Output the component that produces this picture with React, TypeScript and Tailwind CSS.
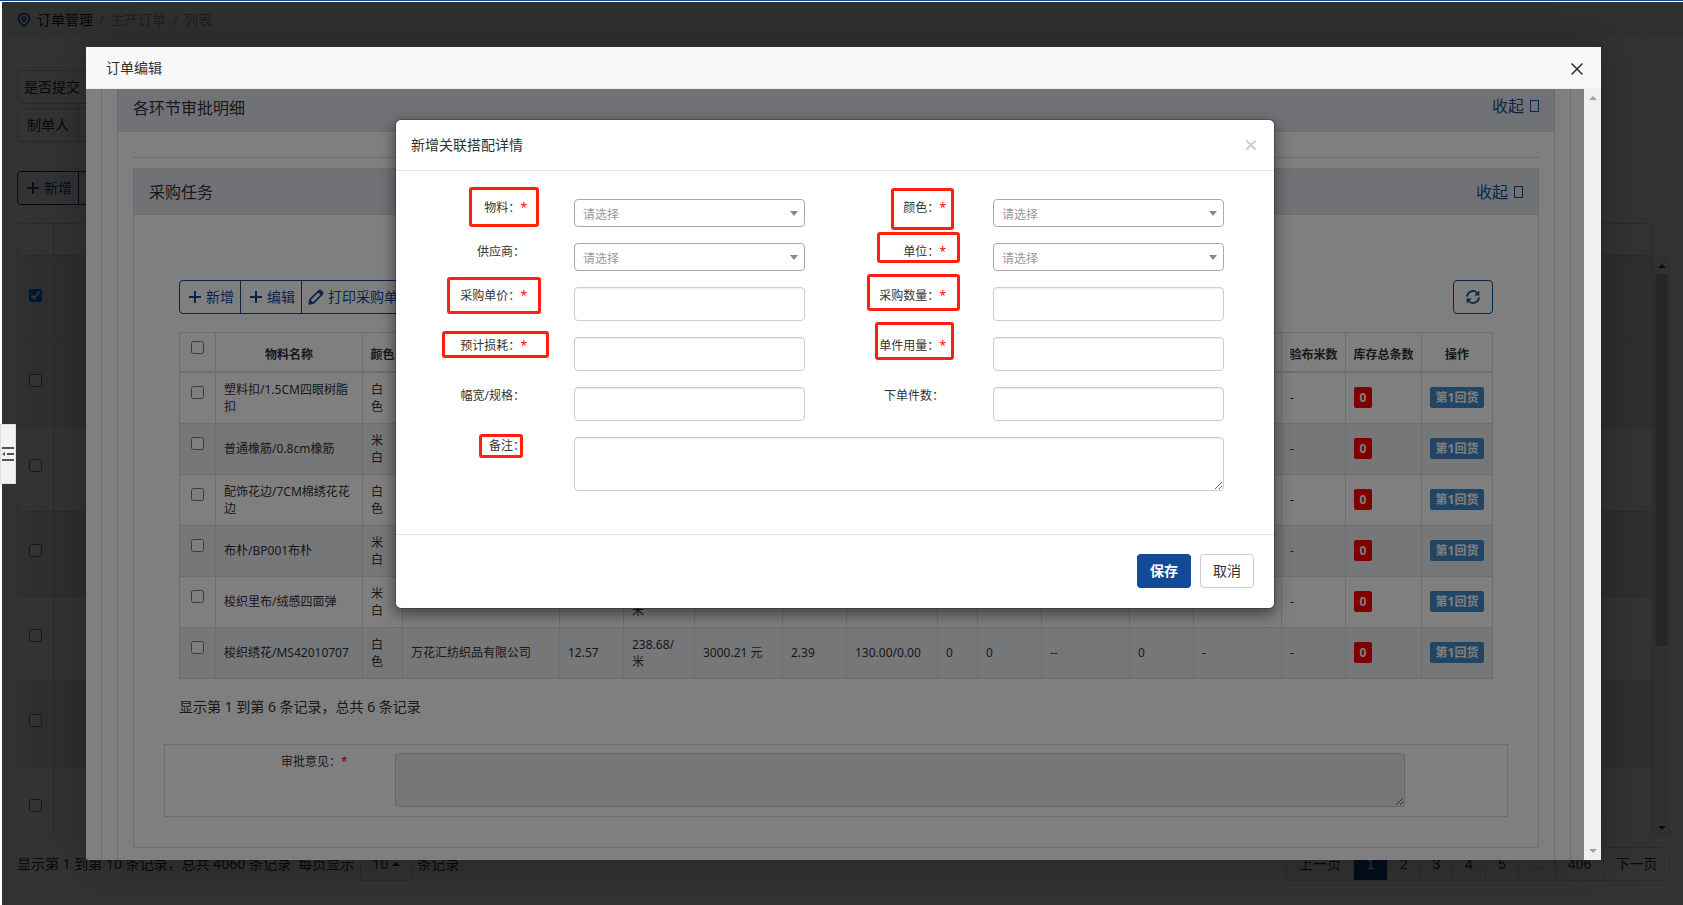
import { clsx } from 'clsx';

type Field = {
  id: string;
  label: string;
  required?: boolean;
  select?: boolean;
  mark?: string;
};

const FIELDS: Field[] = [
  { id: 'material', label: '物料：', required: true, select: true, mark: '-right-3 -top-3 w-[70px] h-10' },
  { id: 'color', label: '颜色：', required: true, select: true, mark: '-right-2 -top-[11px] w-[63px] h-[42px]' },
  { id: 'supplier', label: '供应商：', select: true },
  { id: 'unit', label: '单位：', required: true, select: true, mark: '-right-3.5 -top-[11px] w-[83px] h-[31px]' },
  { id: 'price', label: '采购单价：', required: true, mark: '-right-3.5 -top-2.5 w-[94px] h-[37px]' },
  { id: 'amount', label: '采购数量：', required: true, mark: '-right-3.5 -top-[13px] w-[93px] h-[37px]' },
  { id: 'loss', label: '预计损耗：', required: true, mark: '-right-[22px] -top-1.5 w-[107px] h-[27px]' },
  { id: 'usage', label: '单件用量：', required: true, mark: '-right-2 -top-[15px] w-[79px] h-[38px]' },
  { id: 'spec', label: '幅宽/规格：' },
  { id: 'pieces', label: '下单件数：' },
];

const COLUMNS = [
  { w: 36, title: '' },
  { w: 147, title: '物料名称' },
  { w: 40, title: '颜色' },
  { w: 157, title: '' },
  { w: 64, title: '' },
  { w: 71, title: '' },
  { w: 88, title: '' },
  { w: 64, title: '' },
  { w: 91, title: '' },
  { w: 40, title: '' },
  { w: 64, title: '' },
  { w: 88, title: '' },
  { w: 64, title: '' },
  { w: 88, title: '' },
  { w: 64, title: '验布米数' },
  { w: 76, title: '库存总条数' },
  { w: 71, title: '操作' },
];

const ROWS = [
  { name: '塑料扣/1.5CM四眼树脂扣', color: '白色', cells: ['', '', '', '', '', '', '', '', '', '', ''] },
  { name: '普通橡筋/0.8cm橡筋', color: '米白', cells: ['', '', '', '', '', '', '', '', '', '', ''] },
  { name: '配饰花边/7CM棉绣花花边', color: '白色', cells: ['', '', '', '', '', '', '', '', '', '', ''] },
  { name: '布朴/BP001布朴', color: '米白', cells: ['', '', '', '', '', '', '', '', '', '', ''] },
  { name: '梭织里布/绒感四面弹', color: '米白', cells: ['', '', '238.68/米', '', '', '', '', '', '', '', ''] },
  {
    name: '梭织绣花/MS42010707',
    color: '白色',
    cells: ['万花汇纺织品有限公司', '12.57', '238.68/米', '3000.21 元', '2.39', '130.00/0.00', '0', '0', '--', '0', '-'],
  },
];

const LIST_ROWS = ['bg-[#e9e9e9]', 'bg-[#eaebed]', 'bg-white', 'bg-[#eaebed]', 'bg-white', 'bg-[#eaebed]', 'bg-white'];

const PAGES = [
  { text: '上一页', w: 'w-[66px]' },
  { text: '1', w: 'w-[34px]' },
  { text: '2', w: 'w-[33px]' },
  { text: '3', w: 'w-8' },
  { text: '4', w: 'w-[33px]' },
  { text: '5', w: 'w-[33px]' },
  { text: '...', w: 'w-[37px]' },
  { text: '406', w: 'w-12' },
  { text: '下一页', w: 'w-[66px]' },
];

function PlusIcon() {
  return (
    <svg className="w-3 h-3 shrink-0" viewBox="0 0 12 12" fill="currentColor">
      <path d="M5 0h2v5h5v2H7v5H5V7H0V5h5z" />
    </svg>
  );
}

function PencilIcon() {
  return (
    <svg className="w-4 h-4 shrink-0" viewBox="0 0 16 16" fill="none" stroke="currentColor" strokeWidth="1.7" strokeLinejoin="round">
      <path d="M1.2 14.8l1-4.4L10.8 1.8q1-.9 2 0l1.4 1.4q.9 1 0 2L5.6 13.8z" />
      <path d="M9.6 3l3.4 3.4 1.600-1.600L11.600 1.200z" fill="currentColor" stroke="none" />
      <path d="M2.2 10.6l3.2 3.2-4.4 1z" fill="currentColor" stroke="none" />
    </svg>
  );
}

function RefreshIcon() {
  return (
    <svg className="w-3.5 h-3.5" viewBox="0 0 14 14" fill="none" stroke="currentColor" strokeWidth="1.7">
      <path d="M1 6.6A6 6 0 0 1 11.6 3.2" />
      <path d="M13 7.4A6 6 0 0 1 2.4 10.8" />
      <path d="M13.3 .5v5H8.3z" fill="currentColor" stroke="none" />
      <path d="M.7 13.5v-5h5z" fill="currentColor" stroke="none" />
    </svg>
  );
}

function PinIcon() {
  return (
    <svg className="w-3.5 h-3.5 text-[#134a97]" viewBox="0 0 14 14" fill="none" stroke="currentColor" strokeWidth="1.5">
      <path d="M7 13.2C4 10.8 1.6 8.4 1.6 5.8a5.4 5.2 0 0 1 10.8 0c0 2.6-2.4 5-5.4 7.4z" />
      <circle cx="7" cy="5.8" r="1.8" />
    </svg>
  );
}

function Caret({ up, className }: { up?: boolean; className?: string }) {
  return (
    <svg className={clsx('w-2 h-1', className)} viewBox="0 0 8 4" fill="currentColor">
      <path d={up ? 'M0 4L4 0l4 4z' : 'M0 0h8L4 4z'} />
    </svg>
  );
}

function CollapseLink() {
  return (
    <a href="#" className="flex items-center gap-1.5 text-base leading-5 text-[#134a97]">
      收起
      <span className="w-[9px] h-3 border border-current" />
    </a>
  );
}

function OrderList() {
  return (
    <div className="flex flex-col h-full">
      <nav className="flex items-center h-9 pl-[15px] bg-[#f0f0f0] text-sm leading-5 text-[#999]">
        <PinIcon />
        <a href="#" className="ml-1.5 text-[#222]">订单管理</a>
        <span className="w-[17px] text-center">/</span>
        <a href="#">生产订单</a>
        <span className="w-[18px] text-center">/</span>
        <span>列表</span>
      </nav>

      <div className="pl-[15px] pt-8 text-sm leading-5 text-[#333]">
        <div className="flex items-center w-60 h-[34px] pl-1.5 border border-[#ccc] rounded">是否提交</div>
        <div className="flex items-center w-60 h-[34px] mt-1 border border-[#ccc] rounded">
          <span className="flex items-center h-full w-[61px] pl-[9px] border-r border-[#ccc]">制单人</span>
        </div>
        <div className="flex mt-[29px] text-[#134a97]">
          <button className="flex items-center gap-[5px] h-[34px] w-[62px] pl-[9px] border border-current rounded-l">
            <PlusIcon />
            新增
          </button>
          <button className="h-[34px] w-[62px] -ml-px border border-current" aria-label="编辑" />
        </div>
      </div>

      <div className="flex h-[614px] ml-[15px] mr-[13px] mt-[18px]">
        <div className="flex-1 overflow-hidden">
          <div className="flex h-[34px] border border-b-2 border-[#ddd]">
            <div className="w-9 border-r border-[#ddd]" />
          </div>
          {LIST_ROWS.map((bg, i) => (
            <div key={i} className={clsx('flex h-[85px] border-x border-b border-[#ddd]', bg)}>
              <div className="flex items-center justify-center w-9 pb-2 border-r border-[#ddd]">
                <input type="checkbox" aria-label="选择" className="w-[13px] h-[13px]" defaultChecked={i === 0} />
              </div>
            </div>
          ))}
        </div>
        <div className="flex flex-col items-center justify-between w-[17px] mt-[34px] py-[7px] bg-[#f1f1f1] text-[#333]">
          <Caret up />
          <div className="w-[13px] h-[372px] mb-auto mt-[6px] bg-[#c1c1c1]" />
          <Caret />
        </div>
      </div>

      <div className="flex items-center h-[34px] pl-[15px] pr-[13px] mt-[10px] text-sm leading-5 text-[#333]">
        <span className="whitespace-pre">显示第 1 到第 10 条记录，总共 4060 条记录  每页显示</span>
        <button className="flex items-center justify-center gap-1 w-[52px] h-[34px] ml-1.5 mr-[5px] border border-[#ccc] rounded">
          10 <Caret up />
        </button>
        <span>条记录</span>
        <div className="flex ml-auto border border-[#ddd] rounded font-['Liberation_Sans','Noto_Sans_CJK_SC',sans-serif]">
          {PAGES.map((p, i) => (
            <button
              key={p.text}
              className={clsx(
                'h-8 border-[#ddd]',
                p.w,
                i > 0 && 'border-l',
                p.text === '1' && 'bg-[#134a97] text-white',
                p.text === '...' && 'text-[#999]'
              )}
            >
              {p.text}
            </button>
          ))}
        </div>
      </div>
    </div>
  );
}

function MaterialTable() {
  return (
    <table className="w-full table-fixed border-collapse text-xs leading-[17px] text-[#333]">
      <colgroup>
        {COLUMNS.map((c, i) => (
          <col key={i} style={{ width: c.w }} />
        ))}
      </colgroup>
      <thead>
        <tr className="h-[39px]">
          {COLUMNS.map((c, i) => (
            <th
              key={i}
              className={clsx(
                'border border-b-2 border-[#ddd] font-bold whitespace-nowrap',
                i === 0 ? 'align-top pt-2' : 'align-bottom pb-2'
              )}
            >
              {i === 0 ? <input type="checkbox" aria-label="全选" className="block w-[13px] h-[13px] mx-auto" /> : c.title}
            </th>
          ))}
        </tr>
      </thead>
      <tbody>
        {ROWS.map((row, i) => (
          <tr key={row.name} className={clsx('h-[51px]', i % 2 === 1 && 'bg-[#eceff3]')}>
            <td className="border border-[#ddd] pb-2.5">
              <input type="checkbox" aria-label={row.name} className="block w-[13px] h-[13px] mx-auto" />
            </td>
            <td className="border border-[#ddd] p-2">{row.name}</td>
            <td className="border border-[#ddd] pl-2 pr-4">{row.color}</td>
            {row.cells.map((cell, j) => (
              <td key={j} className={clsx('border border-[#ddd] px-2', j !== 2 && 'whitespace-nowrap')}>
                {j === 2 && cell ? (
                  <>
                    {cell.slice(0, -1)}
                    <br />
                    {cell.slice(-1)}
                  </>
                ) : (
                  cell
                )}
              </td>
            ))}
            <td className="border border-[#ddd] px-2">-</td>
            <td className="border border-[#ddd] px-2">
              <span className="flex items-center justify-center w-[18px] h-[21px] rounded-xs bg-[#ff0000] text-white font-bold">0</span>
            </td>
            <td className="border border-[#ddd] px-2">
              <button className="flex items-center justify-center w-[54px] h-[21px] rounded-xs bg-[#428bca] text-white font-bold whitespace-nowrap">
                第1回货
              </button>
            </td>
          </tr>
        ))}
      </tbody>
    </table>
  );
}

function TaskPanel() {
  return (
    <section className="border border-[#ddd]">
      <header className="flex items-center justify-between h-[46px] px-[15px] border-b border-[#ddd] bg-[#e2e5ec]">
        <h3 className="text-base leading-5 text-[#333]">采购任务</h3>
        <CollapseLink />
      </header>
      <div className="px-[45px] pt-[65px]">
        <div className="flex items-center text-sm leading-5 text-[#134a97]">
          <button className="flex items-center gap-[5px] h-[34px] w-[62px] pl-[9px] border border-current rounded-l">
            <PlusIcon />
            新增
          </button>
          <button className="flex items-center gap-[5px] h-[34px] w-[62px] pl-[9px] -ml-px border border-current">
            <PlusIcon />
            编辑
          </button>
          <button className="flex items-center gap-1 h-[34px] px-[6px] -ml-px border border-current rounded-r">
            <PencilIcon />
            打印采购单
          </button>
          <button className="flex items-center justify-center w-10 h-[34px] ml-auto border border-current rounded" aria-label="刷新">
            <RefreshIcon />
          </button>
        </div>
        <div className="mt-[18px]">
          <MaterialTable />
        </div>
        <p className="mt-[18px] text-sm leading-5 text-[#333]">显示第 1 到第 6 条记录，总共 6 条记录</p>
      </div>
      <div className="grid grid-cols-[230fr_1012fr_102fr] mx-[30px] mt-[27px] mb-[30px] h-[73px] pt-2 border border-[#ddd]">
        <label htmlFor="opinion" className="pr-[47px] text-right text-xs leading-[17px] text-[#333]">
          审批意见：<span className="text-[#f00]">*</span>
        </label>
        <textarea id="opinion" className="h-[54px] resize border border-[#ccc] rounded bg-[#eee]" />
      </div>
    </section>
  );
}

function FieldLabel({ field }: { field: Field }) {
  return (
    <label
      htmlFor={field.id}
      className={clsx(
        'relative w-[111px] h-[17px] mr-[47px] shrink-0 text-right text-xs leading-[17px] text-[#333]',
        !field.required && 'pr-0.5'
      )}
    >
      {field.label}
      {field.required && <span className="text-[#f00]">*</span>}
      {field.mark && <span className={clsx('absolute border-3 border-[#ff2010] rounded-[3px]', field.mark)} />}
    </label>
  );
}

function MatchDialog() {
  return (
    <div
      role="dialog"
      className="w-[880px] max-w-full mt-[30px] border border-black/20 rounded-md bg-white bg-clip-padding shadow-[0_5px_15px_rgba(0,0,0,0.5)]"
    >
      <header className="flex items-center justify-between h-[51px] pl-[15px] pr-[18px] border-b border-[#e5e5e5]">
        <h4 className="text-sm leading-5 text-[#333]">新增关联搭配详情</h4>
        <button aria-label="关闭" className="text-[#ccc]">
          <svg className="w-2.5 h-2.5" viewBox="0 0 10 10" stroke="currentColor" strokeWidth="2">
            <path d="M.5 .5l9 9M9.5 .5l-9 9" />
          </svg>
        </button>
      </header>

      <form className="px-5 pt-7 pb-[43px]">
        <div className="grid grid-cols-2 gap-y-4">
          {FIELDS.map(field => (
            <div key={field.id} className="flex pr-[30px]">
              <FieldLabel field={field} />
              {field.select ? (
                <div className="relative flex-1">
                  <select
                    id={field.id}
                    className="block w-full h-7 pl-2 pt-1 appearance-none border border-[#aaa] rounded bg-white text-xs leading-5 text-[#999]"
                  >
                    <option>请选择</option>
                  </select>
                  <svg className="absolute right-[7px] top-3 w-2 h-[5px] text-[#888]" viewBox="0 0 8 5" fill="currentColor">
                    <path d="M0 0h8L4 5z" />
                  </svg>
                </div>
              ) : (
                <input
                  id={field.id}
                  type="text"
                  className="flex-1 min-w-0 h-[34px] px-3 border border-[#ccc] rounded text-sm shadow-[inset_0_1px_1px_rgba(0,0,0,0.075)]"
                />
              )}
            </div>
          ))}
        </div>
        <div className="flex mt-4 pr-[30px]">
          <FieldLabel field={{ id: 'remark', label: '备注：', mark: 'right-1 -top-[3px] w-11 h-6' }} />
          <textarea
            id="remark"
            className="flex-1 h-[54px] resize border border-[#ccc] rounded shadow-[inset_0_1px_1px_rgba(0,0,0,0.075)]"
          />
        </div>
      </form>

      <footer className="flex justify-end gap-[9px] px-5 pt-[19px] pb-5 border-t border-[#e5e5e5] text-sm leading-5">
        <button className="w-[54px] h-[34px] rounded bg-[#134a97] text-white font-bold">保存</button>
        <button className="w-[54px] h-[34px] border border-[#ccc] rounded bg-white text-[#333]">取消</button>
      </footer>
    </div>
  );
}

function OrderEditor() {
  return (
    <div className="flex flex-col h-full rounded-xs bg-white shadow-[1px_1px_50px_rgba(0,0,0,0.3)]">
      <header className="flex items-center justify-between h-[42px] shrink-0 pl-5 pr-[18px] border-b border-[#eee] bg-[#f8f8f8]">
        <h2 className="text-sm leading-5 text-[#333]">订单编辑</h2>
        <button aria-label="关闭" className="pt-0.5 text-[#2d2c3b]">
          <svg className="w-3 h-3" viewBox="0 0 12 12" stroke="currentColor" strokeWidth="1.5">
            <path d="M.5 .5l11 11M11.5 .5l-11 11" />
          </svg>
        </button>
      </header>
      <div className="flex flex-1 min-h-0">
        <div className="relative flex-1 overflow-hidden">
          <div className="h-full pl-[15px] pr-[13px]">
            <div className="h-full px-[15px] border-x border-[#ddd]">
              <div className="h-full border-x border-[#ddd]">
                <header className="flex items-center justify-between h-[43px] px-[15px] pb-2 border-b border-[#ddd] bg-[#e2e5ec]">
                  <h3 className="pt-1 text-base leading-5 text-[#333]">各环节审批明细</h3>
                  <CollapseLink />
                </header>
                <div className="px-[15px]">
                  <hr className="mt-[25px] mb-2.5 border-[#ddd]" />
                  <TaskPanel />
                </div>
              </div>
            </div>
          </div>
          <div className="absolute inset-0 flex items-start justify-center bg-black/50">
            <MatchDialog />
          </div>
        </div>
        <div className="flex flex-col items-center justify-between w-[17px] py-[7px] bg-[#f0f0f0] text-[#a3a3a3]">
          <Caret up />
          <Caret />
        </div>
      </div>
    </div>
  );
}

export default function App() {
  return (
    <div className="relative h-screen overflow-hidden border-t border-[#134a97] bg-white font-['Noto_Sans','Noto_Sans_CJK_SC',sans-serif]">
      <div className="h-full pl-0.5 pt-px">
        <OrderList />
      </div>
      <div className="absolute top-px left-0.5 right-0 bottom-0 bg-black/80" />
      <div className="absolute top-px left-0.5 right-0 bottom-0 pl-[84px] pr-[82px] py-[45px]">
        <OrderEditor />
      </div>
      <button
        aria-label="收起菜单"
        className="absolute left-0 top-[423px] flex items-center justify-center w-4 h-[60px] border border-[#ddd] bg-[#f3f3f3] text-[#555]"
      >
        <svg className="w-3 h-3.5" viewBox="0 0 12 14" fill="currentColor">
          <path d="M0 0h12v2H0zM5 6h7v2H5zM0 12h12v2H0zM3 5v4L0 7z" />
        </svg>
      </button>
    </div>
  );
}
